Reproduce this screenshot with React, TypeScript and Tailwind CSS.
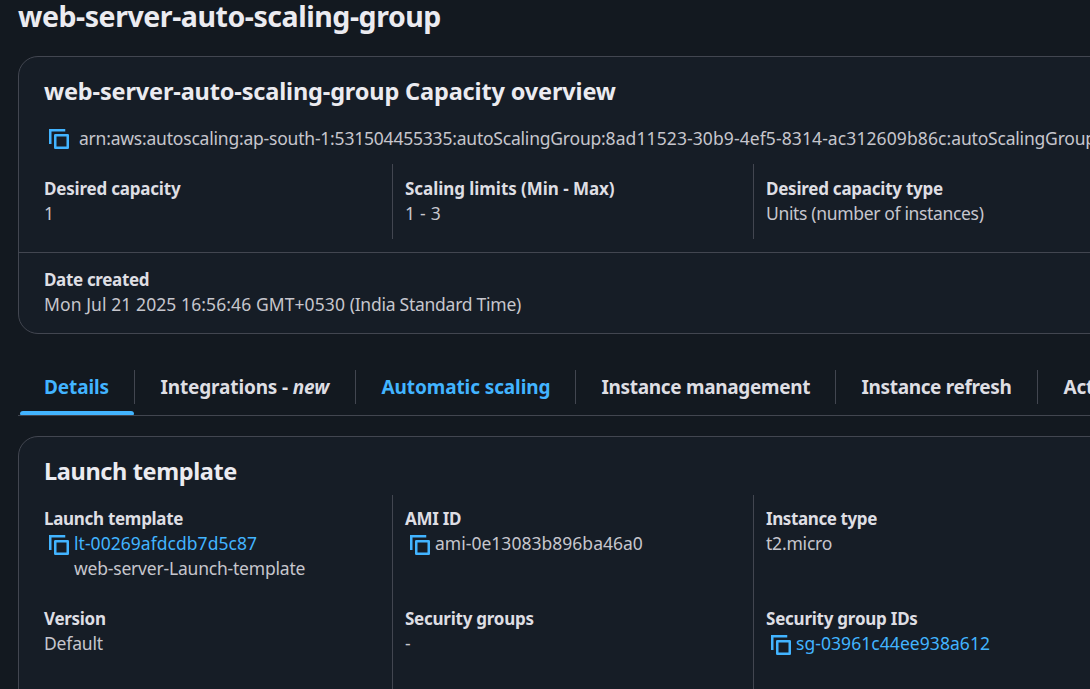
import type { ReactNode } from "react";

function CopyIcon({ className = "" }: { className?: string }) {
  return (
    <svg
      viewBox="0 0 16 16"
      className={`h-5 w-5 shrink-0 fill-none stroke-[#42b4ff] stroke-2 ${className}`}
    >
      <path d="M5 5h10v10H5z" strokeLinejoin="round" />
      <path d="M13 1H1v11" />
    </svg>
  );
}

function Label({ children, className = "" }: { children: ReactNode; className?: string }) {
  return (
    <div className={`text-[17px] leading-[25px] font-bold text-[#dedee3] ${className}`}>
      {children}
    </div>
  );
}

function Value({ children, className = "" }: { children: ReactNode; className?: string }) {
  return <div className={`text-[17.5px] leading-[25px] ${className}`}>{children}</div>;
}

function Heading({ children, className = "" }: { children: ReactNode; className?: string }) {
  return (
    <h2 className={`text-[23.5px] leading-[30px] font-bold text-[#ebebf0] ${className}`}>
      {children}
    </h2>
  );
}

function Column({
  children,
  first = false,
  className = "pt-3",
}: {
  children: ReactNode;
  first?: boolean;
  className?: string;
}) {
  return (
    <div
      className={`flex shrink-0 flex-col ${className} ${
        first ? "w-[348px]" : "w-[361px] border-l border-[#424650] pl-3"
      }`}
    >
      {children}
    </div>
  );
}

const tabs: { label: ReactNode; width: string; color: string; active?: boolean }[] = [
  { label: "Details", width: "w-[116px] tracking-[-0.1px]", color: "text-[#42b4ff]", active: true },
  {
    label: (
      <>
        Integrations - <i className="tracking-[-0.1px]">new</i>
      </>
    ),
    width: "w-[221px] tracking-[-0.15px]",
    color: "text-[#dedee3]",
  },
  { label: "Automatic scaling", width: "w-[220px] tracking-[-0.1px]", color: "text-[#42b4ff]" },
  { label: "Instance management", width: "w-[260px] tracking-[-0.32px]", color: "text-[#dedee3]" },
  { label: "Instance refresh", width: "w-[202px] tracking-[-0.35px]", color: "text-[#dedee3]" },
  { label: "Activity", width: "w-[130px] tracking-[-0.2px]", color: "text-[#dedee3]" },
];

export default function App() {
  return (
    <div className="h-[689px] w-full overflow-hidden bg-[#131920] font-['Noto_Sans','Liberation_Sans',sans-serif] whitespace-nowrap text-[#c6c6cd]">
      <div className="ml-[18px] w-[1400px]">
        <h1 className="h-14 text-[28.5px] leading-[33px] font-bold tracking-[-0.45px] text-[#ebebf0]">
          web-server-auto-scaling-group
        </h1>

        <section className="h-[278px] rounded-[20px] border border-[#424650] bg-[#161d26]">
          <div className="h-[196px] border-b border-[#424650] pt-[19px] pl-[25px]">
            <Heading className="tracking-[-0.15px]">
              web-server-auto-scaling-group Capacity overview
            </Heading>
            <div className="mt-5 flex h-[25px] pl-[5px]">
              <CopyIcon className="mt-[3px]" />
              <Value className="ml-[10px]">
                <span className="tracking-[-0.21px]">
                  arn:aws:autoscaling:ap-south-1:531504455335:autoScalingGroup:
                </span>
                <span className="tracking-[0.1px]">8ad11523-30b9-4ef5-8314-ac312609b86c:</span>
                <span className="tracking-[-0.2px]">
                  autoScalingGroupName/web-server-auto-scaling-group
                </span>
              </Value>
            </div>
            <div className="mt-[13px] flex h-[75px]">
              <Column first>
                <Label className="tracking-[-0.2px]">Desired capacity</Label>
                <Value>1</Value>
              </Column>
              <Column>
                <Label className="tracking-[-0.05px]">Scaling limits (Min - Max)</Label>
                <Value className="tracking-[0.25px]">1 - 3</Value>
              </Column>
              <Column>
                <Label className="tracking-[-0.24px]">Desired capacity type</Label>
                <Value className="tracking-[-0.34px]">Units (number of instances)</Value>
              </Column>
            </div>
          </div>
          <div className="pt-[14px] pl-[25px]">
            <Label className="tracking-[-0.33px]">Date created</Label>
            <Value>
              <span className="tracking-[0.09px]">Mon Jul 21 2025 16:56:46 GMT+0530 </span>
              <span className="tracking-[-0.25px]">(India Standard Time)</span>
            </Value>
          </div>
        </section>

        <nav className="mt-9 flex h-[46px] border-b border-[#424650] pl-px">
          {tabs.map((tab, i) => (
            <div key={i} className={`flex flex-col ${tab.width}`}>
              <div
                className={`h-[34px] border-r border-[#424650] text-[19px] leading-[34px] font-bold ${tab.active ? "pl-[25px]" : "pl-[25.5px]"} ${tab.color}`}
              >
                {tab.label}
              </div>
              {tab.active && (
                <div className="mt-[7px] mr-px ml-px h-1 rounded-t-[3px] rounded-b-[1px] bg-[#42b4ff]" />
              )}
            </div>
          ))}
        </nav>

        <section className="mt-5 h-[400px] rounded-[20px] border border-[#424650] bg-[#161d26] pt-[19px] pl-[25px]">
          <Heading className="tracking-[-0.37px]">Launch template</Heading>
          <div className="mt-[9px] flex h-[320px]">
            <Column first className="pt-[11px]">
              <Label className="tracking-[-0.3px]">Launch template</Label>
              <div className="flex pl-[5px] text-[#42b4ff]">
                <CopyIcon className="mt-[4px]" />
                <Value className="ml-[5px] tracking-[0.04px]">lt-00269afdcdb7d5c87</Value>
              </div>
              <Value className="pl-[30px] tracking-[-0.2px]">web-server-Launch-template</Value>
              <Label className="mt-[25px] tracking-[-0.3px]">Version</Label>
              <Value className="tracking-[-0.16px]">Default</Value>
            </Column>
            <Column className="pt-[11px]">
              <Label className="tracking-[-0.3px]">AMI ID</Label>
              <div className="flex pl-[5px]">
                <CopyIcon className="mt-[4px]" />
                <Value className="ml-[5px] tracking-[0.02px]">ami-0e13083b896ba46a0</Value>
              </div>
              <Label className="mt-[50px] tracking-[-0.25px]">Security groups</Label>
              <Value>-</Value>
            </Column>
            <Column className="pt-[11px]">
              <Label className="tracking-[-0.4px]">Instance type</Label>
              <Value className="tracking-[-0.2px]">t2.micro</Value>
              <Label className="mt-[50px] tracking-[-0.24px]">Security group IDs</Label>
              <div className="flex pl-[5px] text-[#42b4ff]">
                <CopyIcon className="mt-[4px]" />
                <Value className="ml-[5px] tracking-[0.06px]">sg-03961c44ee938a612</Value>
              </div>
            </Column>
          </div>
        </section>
      </div>
    </div>
  );
}
